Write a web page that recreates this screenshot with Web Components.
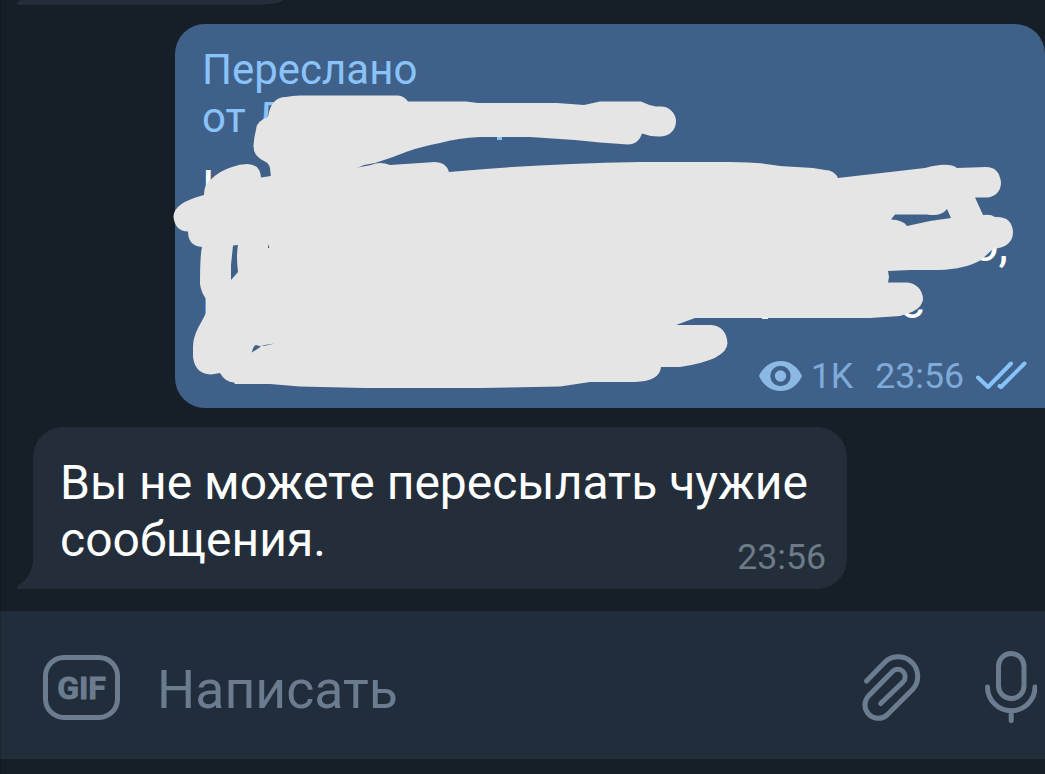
<!DOCTYPE html>
<html lang="ru">
<head>
<meta charset="utf-8">
<title>Чат</title>
<style>
  html, body {
    margin: 0;
    height: 100%;
    overflow: hidden;
    background: #161e27;
  }

  body {
    font-family: Roboto, "Liberation Sans", sans-serif;
  }
</style>
</head>
<body>
<chat-screen>
  <incoming-message class="previous" cut></incoming-message>
  <forwarded-message views="1K" time="23:56">
    <span slot="from">Переслано<br>от Д</span>
  </forwarded-message>
  <incoming-message time="23:56">Вы не можете пересылать чужие<br>сообщения.</incoming-message>
  <message-composer slot="composer" placeholder="Написать"></message-composer>
</chat-screen>

<script>
const createTemplate = html => {
  const template = document.createElement('template')
  template.innerHTML = html
  return template
}

const screenTemplate = createTemplate(`
  <style>
    :host {
      display: flex;
      flex-direction: column;
      width: 1045px;
      height: 774px;
      overflow: hidden;
      background: #161e27;
      box-shadow: inset 1px 0 #101923;
    }

    main {
      display: flex;
      flex-direction: column;
      align-items: flex-start;
      gap: 19px;
      height: 611px;
    }
  </style>
  <main><slot></slot></main>
  <slot name="composer"></slot>
`)

const incomingTemplate = createTemplate(`
  <style>
    :host {
      position: relative;
      display: flex;
      flex-direction: column;
      box-sizing: border-box;
      width: 814px;
      height: 162px;
      margin-left: 33px;
      padding: 27px 21px 10px 27px;
      border-radius: 30px 30px 30px 0;
      background: #232e3a;
      color: #fff;
    }

    :host([cut]) {
      width: 250px;
      height: 5px;
      padding: 0;
      border-radius: 0 0 30px 0 / 0 0 5px 0;
    }

    p {
      margin: 0;
      font-size: 48px;
      line-height: 57px;
      white-space: nowrap;
    }

    time {
      align-self: flex-end;
      margin-top: -32px;
      font-size: 35.700px;
      line-height: 42px;
      color: #6d7b89;
    }

    :host([cut]) p, :host([cut]) time {
      display: none;
    }

    .tail {
      position: absolute;
      left: -17px;
      bottom: 0;
    }
  </style>
  <p><slot></slot></p>
  <time></time>
  <svg class="tail" width="18" height="30" viewBox="0 0 18 30"><path d="M17 0V2Q15 20 1 27Q0 30 3 30H18V0Z" fill="#232e3a"/></svg>
`)

class IncomingMessage extends HTMLElement {

  constructor() {
    super()
    this.attachShadow({mode: 'open'})
    this.shadowRoot.appendChild(incomingTemplate.content.cloneNode(true))
  }

  connectedCallback() {
    this.shadowRoot.querySelector('time').textContent = this.getAttribute('time') || ''
    if (this.hasAttribute('cut')) {
      this.shadowRoot.querySelector('.tail').setAttribute('height', 5)
      this.shadowRoot.querySelector('.tail').setAttribute('viewBox', '0 25 18 5')
    }
  }
}

const forwardedTemplate = createTemplate(`
  <style>
    :host {
      position: relative;
      display: flex;
      flex-direction: column;
      box-sizing: border-box;
      width: 870px;
      height: 384px;
      margin-left: 175px;
      padding: 22px 18px 11px 27px;
      border-radius: 30px 30px 0 30px;
      background: #3f6189;
    }

    .from {
      font-size: 42px;
      line-height: 48px;
      color: #8ac2fa;
    }

    .quote {
      display: flex;
      flex-direction: column;
      margin-top: 17px;
      font-size: 48px;
      line-height: 57px;
      color: #fff;
    }

    .quote div {
      display: flex;
      justify-content: space-between;
    }

    .quote div:nth-child(2) {
      padding-right: 19px;
    }

    .quote div:nth-child(3) {
      padding-right: 103px;
    }

    .meta {
      display: flex;
      align-items: center;
      justify-content: flex-end;
      margin-top: auto;
      font-size: 35.700px;
      line-height: 42px;
      color: #7fabd9;
    }

    .views {
      margin: 0 22px 0 9px;
    }

    .checks {
      margin-left: 11px;
    }

    /* the marker strokes lie over the bubble and run past its edge */
    .marker {
      position: absolute;
      left: 0;
      top: 0;
      overflow: visible;
    }
  </style>
  <div class="from"><slot name="from"></slot></div>
  <div class="quote">
    <div><span>Н</span></div>
    <div><span></span><span>о,</span></div>
    <div><span>и</span><span>с</span></div>
  </div>
  <div class="meta">
    <svg width="43" height="30" viewBox="0 0 43 30">
      <path fill="#8bb9e3" fill-rule="evenodd" d="M0 15C4 6 12 0 21.5 0S39 6 43 15C39 24 31 30 21.5 30S4 24 0 15ZM21.500 4.800a10.200 10.200 0 1 0 0 20.400a10.200 10.200 0 1 0 0-20.400Z"/>
      <circle cx="21.500" cy="15" r="5.700" fill="#8bb9e3"/>
    </svg>
    <span class="views"></span>
    <time></time>
    <svg class="checks" width="52" height="30" viewBox="0 0 52 30" fill="none" stroke="#86c3fa" stroke-width="4" stroke-linecap="round" stroke-linejoin="round">
      <path d="M3 16.500L13 26L36 2.500M24.500 25L26 26L49.500 2.500"/>
    </svg>
  </div>
  <svg class="marker" width="870" height="384" viewBox="175 24 870 384" fill="#e5e5e5">
    <path d="M271 178L270 168Q269 163 264 161Q253 156 253.500 145Q254 137 256 130Q256 121 268 117Q271 97 286 97Q292 95.500 300 95.500H398Q404 96 408 101.500L466 101.500L478 103H557L584 105L600 101.500H641Q648 105 656 106.500H661A15 15 0 0 1 661 136.500Q651 137 642 133.500Q639 144 628 144.500L600 142.500L575 140L530 137H480Q458 138 440 143Q417 147 393 157L375 163L364 165L355 169L350 180Z"/>
    <path fill-rule="evenodd" d="M271 176L261 177.500Q260 164 247 164Q240 164 232 167Q219 171 211 179.500Q204 184 204 195Q173 203 173.500 217Q175 231 188 231.500Q188 246 202 247Q200 256 200 284Q201 292 206 299V313Q202 321 198 328Q193 338 193 347V357Q195 374 211 374.500L220 373Q225 382 234 382.500L235 384H270L300 386.500L365 388H480L560 386.500L590 382H635Q660 381 661 367H680Q727 360 727.500 343Q726 326 711 325H676L695 318H870L900 316L912 312Q923 307 923 298Q921 284 907 282.500H888L889 277L888 271L910 270H938Q966 269 981 260L993 249Q1013 247 1013 232Q1012 216 995 217Q991 214 983 215L975 197.500H988Q1001 195 1001 182Q999 167 986 167L957 168Q952 164 940 165Q931 166 925 168L838 178Q834 170 825 170L813 168L780 166Q760 162 730 162H640Q535 164 449 172Q446 162 435 162L390 165Q380 161 371 165L350 169ZM891 219.500L895 214.500H927Q941 217 947 209L951 218L930 221L907 226Q903 220 891 219.500ZM233 245.500L238 245Q236 256 238 272L231 280V265Z"/>
    <path fill="#3f6189" d="M252 352.500Q253 346 256 345L261 346.500ZM261 345.500L275 343.500L265 345.800ZM268 244L269.500 248H268Z"/>
    <path fill="#8ac2fa" d="M497 137H502V140H497Z"/>
    <path fill="#e9f1f9" d="M762 317.500H768V319H762Z"/>
  </svg>
`)

class ForwardedMessage extends HTMLElement {

  constructor() {
    super()
    this.attachShadow({mode: 'open'})
    this.shadowRoot.appendChild(forwardedTemplate.content.cloneNode(true))
  }

  connectedCallback() {
    this.shadowRoot.querySelector('.views').textContent = this.getAttribute('views')
    this.shadowRoot.querySelector('time').textContent = this.getAttribute('time')
  }
}

const composerTemplate = createTemplate(`
  <style>
    :host {
      display: flex;
      align-items: center;
      box-sizing: border-box;
      height: 148px;
      padding: 4px 8px 0 43px;
      background: #212d3b;
      color: #6c7c90;
      box-shadow: inset 1px 0 #1a2632;
    }

    .gif {
      display: flex;
      align-items: center;
      justify-content: center;
      box-sizing: border-box;
      width: 77px;
      height: 65px;
      padding-top: 1px;
      border: 5px solid;
      border-radius: 21px;
      font-size: 32px;
      font-weight: 700;
      -webkit-text-stroke: .8px;
    }

    .placeholder {
      flex: 1;
      margin: 5px 0 0 37px;
      font-size: 53.600px;
      line-height: 60px;
    }

    svg {
      fill: none;
      stroke: currentColor;
      stroke-width: 5;
      stroke-linecap: round;
    }

    .mic {
      margin-left: 63px;
    }
  </style>
  <span class="gif">GIF</span>
  <span class="placeholder"></span>
  <svg width="60" height="70" viewBox="861 652 60 70">
    <path d="M866.500 681L885.500 661.500A19.500 19.500 0 0 1 913 689L887 715A13.300 13.300 0 0 1 868 696.500L892.500 671.500A7.300 7.300 0 0 1 903 682L880.700 703.500"/>
  </svg>
  <svg class="mic" width="53" height="74" viewBox="984 650 53 74">
    <rect x="998.500" y="653.500" width="25.500" height="45" rx="12.700"/>
    <path d="M987.500 687A23.700 23.700 0 0 0 1035 687M1011.200 711V720.500"/>
  </svg>
`)

class MessageComposer extends HTMLElement {

  constructor() {
    super()
    this.attachShadow({mode: 'open'})
    this.shadowRoot.appendChild(composerTemplate.content.cloneNode(true))
  }

  connectedCallback() {
    this.shadowRoot.querySelector('.placeholder').textContent = this.getAttribute('placeholder')
  }
}

class ChatScreen extends HTMLElement {

  constructor() {
    super()
    this.attachShadow({mode: 'open'})
    this.shadowRoot.appendChild(screenTemplate.content.cloneNode(true))
  }
}

customElements.define('incoming-message', IncomingMessage)
customElements.define('forwarded-message', ForwardedMessage)
customElements.define('message-composer', MessageComposer)
customElements.define('chat-screen', ChatScreen)
</script>
</body>
</html>
